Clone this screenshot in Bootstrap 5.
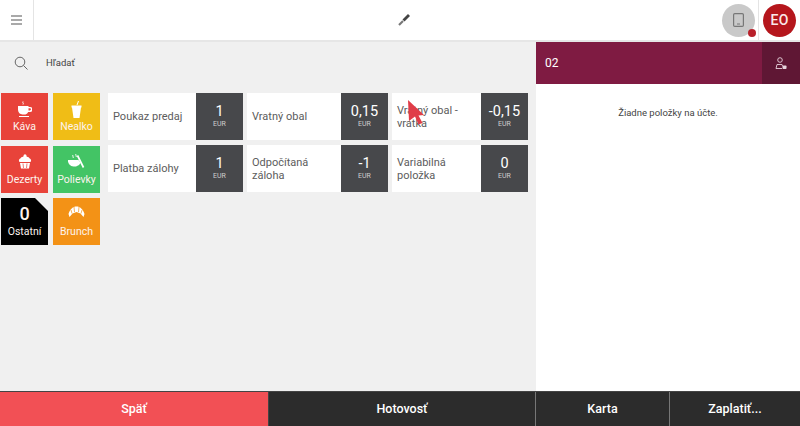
<!DOCTYPE html>
<html lang="sk"><head><meta charset="utf-8"><title>POS</title>
<link rel="stylesheet" href="https://cdn.jsdelivr.net/npm/bootstrap@5.3.0/dist/css/bootstrap.min.css">
<style>
html,body{height:426px;overflow:hidden}
body{font-family:Roboto,sans-serif;background:#fff;color:#555;position:relative}
.shell{width:800px;height:426px}
.topbar{height:42px;border-bottom:2px solid #e6e6e6;background:#fff}
.burger{width:34px;height:40px;border-right:1px solid #e4e4e4}
.topmid{flex:1 1 auto;height:40px}
.wrench{margin-left:52px}
.toprt{width:74px;height:40px;margin-right:4px}
.tablet{width:33px;height:33px;border-radius:50%;background:#c9c9c9;position:relative}
.dot{position:absolute;width:8px;height:8px;border-radius:50%;background:#b8202a;right:-1px;bottom:0}
.sep{width:1px;height:40px;background:#e4e4e4;margin-left:3px}
.avatar{width:33px;height:33px;border-radius:50%;background:#b5161c;color:#fbe9e9;font-size:14px;font-weight:500;margin-left:4px;letter-spacing:.3px}
.mainrow{height:349px}
.leftpane{width:536px;background:#f0f0f0}
.searchrow{height:42px;padding-left:14px;gap:18px;font-size:9.5px;color:#444}
.tilearea{padding:9px 0 0 1px;gap:8px}
.cats{display:grid;grid-template-columns:47px 47px;grid-auto-rows:47px;column-gap:5px;row-gap:5.5px}
.cat{color:#fdf3ee;font-size:10.5px;padding-top:8px;height:47px}
.cat span{margin-top:auto;padding-bottom:7px;line-height:12px}
.c-red{background:#e8433a}.c-yel{background:#f0bd16}.c-grn{background:#43c465}.c-org{background:#f39216}
.c-blk{background:#000;clip-path:polygon(0 0,34px 0,47px 13px,47px 47px,0 47px);padding-top:5px}
.zero{font-size:18px;font-weight:500;line-height:22px}
.prods{display:grid;grid-template-columns:135px 141px 136px;grid-auto-rows:47px;column-gap:4px;row-gap:5px}
.prod{background:#fff;height:47px;font-size:11px;line-height:13px;color:#5c5c5c}
.pname{flex:1 1 auto;padding-left:5px;padding-right:4px;align-self:center}
.price{width:47px;background:#47484b;color:#fff;font-size:14.5px;font-weight:400;line-height:15px}
.price small{font-size:7px;font-weight:400;line-height:10px;color:#cfcfcf}
.rightpane{width:264px;background:#fff}
.billhead{height:42px;background:#7f1b42;color:#fff;font-size:12px;padding-left:9px}
.billbtn{width:38px;height:42px;background:#5f1734}
.empty{font-size:9.5px;color:#444;margin-top:22px}
.bottombar{height:35px;border-top:1px solid #444}
.act{height:35px;color:#fff;font-family:Roboto,sans-serif;font-weight:500;font-size:12.5px;background:#2c2c2c;border:0;border-radius:0;padding:0}
.act:hover{color:#fff;background:#2c2c2c}
.a-back{width:268px;background:#f25055}
.a-back:hover{background:#f25055}
.a-cash{width:267px;border-left:1px solid #444}
.a-card{width:134px;border-left:1px solid #777}
.a-pay{width:131px;border-left:1px solid #777}
.pointer{position:absolute;left:407px;top:99px;width:18px;height:26px}
</style></head><body>
<div class="shell d-flex flex-column">
 <div class="topbar d-flex align-items-start">
  <div class="burger d-flex align-items-center justify-content-center">
   <svg width="11" height="10" viewBox="0 0 11 10"><path d="M0 1h11M0 5h11M0 9h11" stroke="#555" stroke-width="1.1" fill="none"/></svg>
  </div>
  <div class="topmid d-flex align-items-center justify-content-center">
   <svg width="12" height="12" viewBox="0 0 12 12" class="wrench"><path d="M1 11 5 7" stroke="#777" stroke-width="2.2"/><path d="M5.500 6.500 11 1" stroke="#444" stroke-width="2.800"/></svg>
  </div>
  <div class="toprt d-flex align-items-center flex-shrink-0">
   <div class="tablet d-flex align-items-center justify-content-center flex-shrink-0">
    <svg width="11" height="14" viewBox="0 0 11 14"><rect x=".6" y=".6" width="9.800" height="12.800" rx="1.200" fill="none" stroke="#777" stroke-width="1.200"/><path d="M4 11h3" stroke="#777"/></svg>
    <span class="dot"></span>
   </div>
   <span class="sep flex-shrink-0"></span>
   <div class="avatar d-flex align-items-center justify-content-center flex-shrink-0">EO</div>
  </div>
 </div>
 <div class="mainrow d-flex">
  <div class="leftpane d-flex flex-column">
   <div class="searchrow d-flex align-items-center">
    <svg width="14" height="14" viewBox="0 0 14 14"><circle cx="6" cy="6" r="4.800" fill="none" stroke="#666"/><path d="M9.500 9.500 13.500 13.500" stroke="#666"/></svg>
    <span>Hľadať</span>
   </div>
   <div class="tilearea d-flex align-items-start">
    <div class="cats">
     <div class="cat c-red d-flex flex-column align-items-center">
      <svg width="14" height="17" viewBox="0 0 14 17"><path d="M5 0.500c-1 1 1 1.500 0 3" stroke="#fff" fill="none"/><path d="M0 5h10.500v1h1.500a2 2 0 0 1 0 5h-1.800a4 4 0 0 1-2.700 2.500h-3A5 5 0 0 1 0 9zM10.500 7.200v2.300h1.300a1.150 1.150 0 0 0 0-2.300zM1 15h10v1H1z" fill="#fff" fill-rule="evenodd"/></svg>
      <span>Káva</span></div>
     <div class="cat c-yel d-flex flex-column align-items-center">
      <svg width="11" height="18" viewBox="0 0 11 18"><path d="M6 4 7.500 0" stroke="#fff"/><path d="M0.500 4.500h10v2h-.5L8.500 17h-6L1 6.500h-.5z" fill="#fff"/></svg>
      <span>Nealko</span></div>
     <div class="cat c-red d-flex flex-column align-items-center">
      <svg width="14" height="15" viewBox="0 0 14 15"><circle cx="7" cy="1.800" r="1.500" fill="#fff"/><path d="M1.500 8a2.200 2.200 0 0 1 .8-3.500A3 3 0 0 1 5 2.700a3 3 0 0 1 4 0 3 3 0 0 1 2.700 1.800A2.200 2.200 0 0 1 12.500 8z" fill="#fff"/><path d="M2 9h10l-1 5.500H3z" fill="#fff"/><path d="M5 9.500 5.500 14M9 9.500 8.500 14" stroke="#e8433a" stroke-width=".7"/></svg>
      <span>Dezerty</span></div>
     <div class="cat c-grn d-flex flex-column align-items-center">
      <svg width="17" height="15" viewBox="0 0 17 15"><path d="M5 1c-1 1 1 2 0 3M8 0c-1 1 1 2 0 3" stroke="#fff" fill="none"/><path d="M0 6h10.500l1.500 2 .5 1A6 6 0 0 1 8 12.500H5.500A6 6 0 0 1 0 6z" fill="#fff"/><path d="M9.500 1.500 15.500 13.500" stroke="#fff" stroke-width="1.700"/></svg>
      <span>Polievky</span></div>
     <div class="cat c-blk d-flex flex-column align-items-center"><div class="zero">0</div><span>Ostatní</span></div>
     <div class="cat c-org d-flex flex-column align-items-center">
      <svg width="17" height="12" viewBox="0 0 17 12"><path d="M8.500 0.500c3.500 0 6.500 2.500 8 7.500l-1 3-3-3.500-4-1.500-4 1.500-3 3.500-1-3c1.500-5 4.500-7.500 8-7.500z" fill="#fff"/><path d="M6 1 6.500 6M11 1 10.500 6M3 4 4 7.500M14 4 13 7.500" stroke="#f39216" stroke-width=".7"/></svg>
      <span>Brunch</span></div>
    </div>
    <div class="prods">
     <div class="prod d-flex"><div class="pname">Poukaz predaj</div><div class="price d-flex flex-column align-items-center justify-content-center flex-shrink-0">1<small>EUR</small></div></div>
     <div class="prod d-flex"><div class="pname">Vratný obal</div><div class="price d-flex flex-column align-items-center justify-content-center flex-shrink-0">0,15<small>EUR</small></div></div>
     <div class="prod d-flex"><div class="pname">Vratný obal - vratka</div><div class="price d-flex flex-column align-items-center justify-content-center flex-shrink-0">-0,15<small>EUR</small></div></div>
     <div class="prod d-flex"><div class="pname">Platba zálohy</div><div class="price d-flex flex-column align-items-center justify-content-center flex-shrink-0">1<small>EUR</small></div></div>
     <div class="prod d-flex"><div class="pname">Odpočítaná záloha</div><div class="price d-flex flex-column align-items-center justify-content-center flex-shrink-0">-1<small>EUR</small></div></div>
     <div class="prod d-flex"><div class="pname">Variabilná položka</div><div class="price d-flex flex-column align-items-center justify-content-center flex-shrink-0">0<small>EUR</small></div></div>
    </div>
   </div>
  </div>
  <div class="rightpane d-flex flex-column">
   <div class="billhead d-flex align-items-center justify-content-between">
    <span>02</span>
    <div class="billbtn d-flex align-items-center justify-content-center">
     <svg width="12" height="13" viewBox="0 0 12 13"><circle cx="5" cy="3" r="2.300" fill="none" stroke="#e6d4dc" stroke-width=".9"/><path d="M1 11.500 2 7.500h5l.5 1.500M1 11.500h6" fill="none" stroke="#e6d4dc" stroke-width=".9"/><rect x="7.500" y="8.500" width="4" height="3.500" rx=".8" fill="#e6d4dc"/></svg>
    </div>
   </div>
   <div class="empty text-center">Žiadne položky na účte.</div>
  </div>
 </div>
 <div class="bottombar d-flex">
  <button class="btn act a-back">Späť</button>
  <button class="btn act a-cash">Hotovosť</button>
  <button class="btn act a-card">Karta</button>
  <button class="btn act a-pay">Zaplatiť...</button>
 </div>
</div>
<svg class="pointer" viewBox="0 0 18 26"><path d="M1 1 17 16l-5.500.5 4 7.500-4 1.500-3.500-8L2 22z" fill="#e03d48"/></svg>
<script src="https://cdn.jsdelivr.net/npm/bootstrap@5.3.0/dist/js/bootstrap.bundle.min.js"></script>
</body></html>
